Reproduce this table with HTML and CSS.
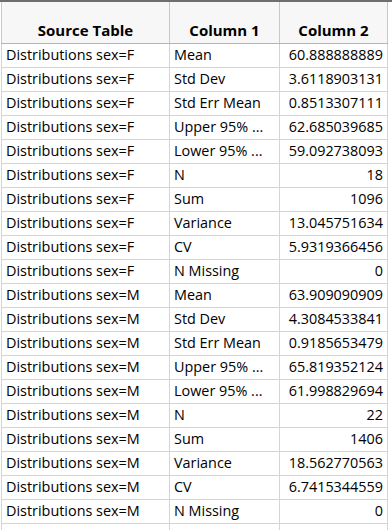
FILE: index.html
```html
<!DOCTYPE html>
<html>
<head>
<meta charset="utf-8">
<link rel="stylesheet" href="styles.css">
</head>
<body>
<div class="topbar"></div>
<table class="grid">
  <colgroup><col class="c0"><col class="c1"><col class="c2"></colgroup>
  <thead>
    <tr><th>Source Table</th><th>Column 1</th><th>Column 2</th></tr>
  </thead>
  <tbody>
    <tr><td>Distributions sex=F</td><td>Mean</td><td class="num">60.888888889</td></tr>
    <tr><td>Distributions sex=F</td><td>Std Dev</td><td class="num">3.6118903131</td></tr>
    <tr><td>Distributions sex=F</td><td>Std Err Mean</td><td class="num">0.8513307111</td></tr>
    <tr><td>Distributions sex=F</td><td>Upper 95% ...</td><td class="num">62.685039685</td></tr>
    <tr><td>Distributions sex=F</td><td>Lower 95% ...</td><td class="num">59.092738093</td></tr>
    <tr><td>Distributions sex=F</td><td>N</td><td class="num">18</td></tr>
    <tr><td>Distributions sex=F</td><td>Sum</td><td class="num">1096</td></tr>
    <tr><td>Distributions sex=F</td><td>Variance</td><td class="num">13.045751634</td></tr>
    <tr><td>Distributions sex=F</td><td>CV</td><td class="num">5.9319366456</td></tr>
    <tr><td>Distributions sex=F</td><td>N Missing</td><td class="num">0</td></tr>
    <tr><td>Distributions sex=M</td><td>Mean</td><td class="num">63.909090909</td></tr>
    <tr><td>Distributions sex=M</td><td>Std Dev</td><td class="num">4.3084533841</td></tr>
    <tr><td>Distributions sex=M</td><td>Std Err Mean</td><td class="num">0.9185653479</td></tr>
    <tr><td>Distributions sex=M</td><td>Upper 95% ...</td><td class="num">65.819352124</td></tr>
    <tr><td>Distributions sex=M</td><td>Lower 95% ...</td><td class="num">61.998829694</td></tr>
    <tr><td>Distributions sex=M</td><td>N</td><td class="num">22</td></tr>
    <tr><td>Distributions sex=M</td><td>Sum</td><td class="num">1406</td></tr>
    <tr><td>Distributions sex=M</td><td>Variance</td><td class="num">18.562770563</td></tr>
    <tr><td>Distributions sex=M</td><td>CV</td><td class="num">6.7415344559</td></tr>
    <tr><td>Distributions sex=M</td><td>N Missing</td><td class="num">0</td></tr>
    <tr class="empty"><td></td><td></td><td></td></tr>
  </tbody>
</table>
</body>
</html>
```

FILE: styles.css
```css
html, body {
  margin: 0;
  padding: 0;
  background: #ffffff;
  overflow: hidden;
}
body {
  font-family: "Open Sans", "Noto Sans", sans-serif;
  font-size: 14.4px;
  color: #000000;
}
.topbar {
  height: 2px;
  background: #6e6e6e;
}
.grid {
  border-collapse: collapse;
  table-layout: fixed;
  margin-left: 1px;
  width: 387px;
}
.c0 { width: 168px; }
.c1 { width: 110px; }
.c2 { width: 108px; }
.grid th {
  height: 41px;
  padding: 0 4px 3px;
  background: #f7f7f7;
  font-size: 15px;
  font-weight: 700;
  text-align: center;
  vertical-align: bottom;
  border-left: 1px solid #c9c9c9;
  border-right: 1px solid #c9c9c9;
  border-bottom: 1px solid #b4b4b4;
  white-space: nowrap;
  overflow: hidden;
  box-sizing: border-box;
}
.grid td {
  height: 24px;
  padding: 0 4px;
  border: 1px solid #d4d4d4;
  border-top: none;
  white-space: nowrap;
  overflow: hidden;
  line-height: 20px;
  box-sizing: border-box;
}
.grid td.num {
  text-align: right;
}
```
